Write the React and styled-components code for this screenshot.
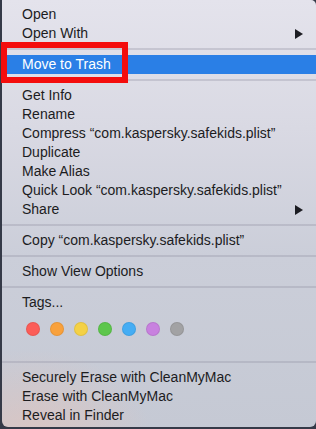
import React from "react";
import styled, { createGlobalStyle } from "styled-components";

const Global = createGlobalStyle`
  html, body {
    margin: 0;
    padding: 0;
    background: #353a48;
  }
  body {
    width: 316px;
    height: 429px;
    overflow: hidden;
  }
`;

const tagColors = [
  "#fc5d58",
  "#f9a13c",
  "#f4d146",
  "#5dc64c",
  "#45adf4",
  "#c881df",
  "#a2a2a4",
];

const App = () => {
  return (
    <>
      <Global />
      <Menu>
        <Item>Open</Item>
        <Item>
          Open With
          <Arrow />
        </Item>
        <Separator />
        <Item active>Move to Trash</Item>
        <Separator />
        <Item>Get Info</Item>
        <Item>Rename</Item>
        <Item>Compress “com.kaspersky.safekids.plist”</Item>
        <Item>Duplicate</Item>
        <Item>Make Alias</Item>
        <Item>Quick Look “com.kaspersky.safekids.plist”</Item>
        <Item>
          Share
          <Arrow />
        </Item>
        <Separator />
        <Item>Copy “com.kaspersky.safekids.plist”</Item>
        <Separator />
        <Item>Show View Options</Item>
        <Separator />
        <Item>Tags...</Item>
        <Tags>
          {tagColors.map((c) => (
            <Dot key={c} color={c} />
          ))}
        </Tags>
        <Separator />
        <Item>Securely Erase with CleanMyMac</Item>
        <Item>Erase with CleanMyMac</Item>
        <Item>Reveal in Finder</Item>
        <Highlight />
      </Menu>
    </>
  );
};

export default App;

const Menu = styled.div`
  position: relative;
  margin-left: 2px;
  width: 314px;
  height: 427px;
  box-sizing: border-box;
  padding-top: 5px;
  display: flex;
  flex-direction: column;
  border-radius: 0 5px 6px 6px;
  background:
    radial-gradient(ellipse 120px 90px at 30px 440px, rgba(226, 196, 188, 0.75), rgba(226, 196, 188, 0) 100%),
    linear-gradient(180deg, #e4e3ec 0%, #d9d9e3 30%, #cbced9 60%, #c5c9d4 100%);
  font-family: "Liberation Sans", Arial, sans-serif;
  font-size: 14px;
  color: #1c1c1e;
`;

const Item = styled.div`
  position: relative;
  height: 19px;
  line-height: 19px;
  padding-left: 20px;
  white-space: nowrap;
  background: ${(p) => (p.active ? "#2a7fe6" : "transparent")};
  color: ${(p) => (p.active ? "#ffffff" : "inherit")};
`;

const Arrow = styled.span`
  position: absolute;
  right: 13px;
  top: 5px;
  width: 0;
  height: 0;
  border-top: 5px solid transparent;
  border-bottom: 5px solid transparent;
  border-left: 8px solid #1c1c22;
`;

const Separator = styled.div`
  height: 12px;
  display: flex;
  align-items: center;

  &::after {
    content: "";
    flex: 1;
    height: 2px;
    background: rgba(150, 150, 165, 0.35);
  }
`;

const Tags = styled.div`
  display: flex;
  gap: 10px;
  padding: 10px 0 20px 24px;
`;

const Dot = styled.span`
  width: 14px;
  height: 14px;
  border-radius: 50%;
  background: ${(p) => p.color};
  box-shadow: inset 0 0 0 1px rgba(0, 0, 0, 0.08);
`;

const Highlight = styled.div`
  position: absolute;
  left: -1px;
  top: 42px;
  width: 127px;
  height: 41px;
  box-sizing: border-box;
  border: 6px solid #f40d0d;
`;
